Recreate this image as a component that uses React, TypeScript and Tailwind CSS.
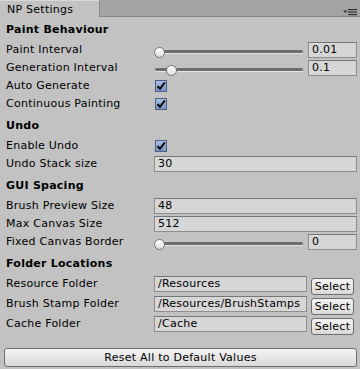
import React from "react";

const font = "font-['DejaVu_Sans',sans-serif]";

function Heading({ children }: { children: React.ReactNode }) {
  return (
    <div className="mt-[4px] mb-[2px] flex h-[18px] items-center pl-[6px] font-bold leading-[18px]">
      {children}
    </div>
  );
}

function Row({ label, children, h = "h-[18px]" }: { label: string; children: React.ReactNode; h?: string }) {
  return (
    <div className={`flex ${h} items-start`}>
      <div className="w-[154px] shrink-0 pl-[6px] leading-[18px] whitespace-nowrap">{label}</div>
      <div className="flex flex-1 items-start pr-[3px]">{children}</div>
    </div>
  );
}

function Field({ value, className = "" }: { value: string; className?: string }) {
  return (
    <div
      className={`mt-[1px] h-[16px] border border-[#8e8e8e] border-t-[#767676] bg-[#d6d6d6] pl-[3px] leading-[14px] whitespace-nowrap overflow-hidden ${className}`}
    >
      {value}
    </div>
  );
}

function Slider({ pos, value }: { pos: number; value: string }) {
  return (
    <div className="flex w-full items-start">
      <div className="relative mt-[1px] h-[16px] w-[149px] shrink-0">
        <div className="absolute left-[1px] right-0 top-[8px] h-[3px] rounded-full bg-[#6d6d6d] shadow-[0_1px_0_#e6e6e6]" />
        <div
          className="absolute top-[5px] h-[11px] w-[11px] rounded-full border border-[#767676] bg-[linear-gradient(#ffffff,#dcdcdc)]"
          style={{ left: pos }}
        />
      </div>
      <div className="ml-[5px] flex-1">
        <Field value={value} />
      </div>
    </div>
  );
}

function Check() {
  return (
    <div className="mt-[3px] ml-[1px] flex h-[12px] w-[12px] items-center justify-center border border-[#4e5f80] bg-[linear-gradient(#a9bde3,#7794c8)]">
      <svg width="10" height="10" viewBox="0 0 10 10">
        <path d="M1.5 5.2 L4 7.8 L8.8 1.5" fill="none" stroke="#000" strokeWidth="2" />
      </svg>
    </div>
  );
}

function FolderRow({ label, value }: { label: string; value: string }) {
  return (
    <Row label={label} h="h-[20px]">
      <Field value={value} className="w-[153px]" />
      <div className="ml-[4px] mt-[3px] flex h-[17px] w-[43px] items-center justify-center rounded-[3px] border border-[#6f6f6f] bg-[linear-gradient(#f4f4f4,#d9d9d9)] leading-none">
        Select
      </div>
    </Row>
  );
}

export default function App() {
  return (
    <div className={`${font} flex h-[369px] w-[360px] flex-col bg-[#c2c2c2] text-[11px] tracking-[0.25px] text-black`}>
      <div className="flex h-[17px] shrink-0 bg-[#a3a3a3]">
        <div className="flex w-[100px] items-center rounded-tr-[2px] border-r border-t border-[#8a8a8a] border-t-[#d8d8d8] bg-[#c2c2c2] pl-[7px] leading-none">
          NP Settings
        </div>
        <div className="relative flex-1 border-b border-[#868686]">
          <div className="absolute right-[3px] top-[9px] flex items-center gap-[1px]">
            <svg width="14" height="7" viewBox="0 0 14 7">
              <path d="M0 1.5 H4.5 L2.25 4 Z" fill="#333" />
              <rect x="5" y="0" width="9" height="1.2" fill="#333" />
              <rect x="5" y="2.5" width="9" height="1.2" fill="#333" />
              <rect x="5" y="5" width="9" height="1.2" fill="#333" />
            </svg>
          </div>
        </div>
      </div>

      <div className="flex flex-1 flex-col">
        <Heading>Paint Behaviour</Heading>
        <Row label="Paint Interval">
          <Slider pos={0} value="0.01" />
        </Row>
        <Row label="Generation Interval">
          <Slider pos={12} value="0.1" />
        </Row>
        <Row label="Auto Generate">
          <Check />
        </Row>
        <Row label="Continuous Painting">
          <Check />
        </Row>

        <Heading>Undo</Heading>
        <Row label="Enable Undo">
          <Check />
        </Row>
        <Row label="Undo Stack size">
          <Field value="30" className="flex-1" />
        </Row>

        <Heading>GUI Spacing</Heading>
        <Row label="Brush Preview Size">
          <Field value="48" className="flex-1" />
        </Row>
        <Row label="Max Canvas Size">
          <Field value="512" className="flex-1" />
        </Row>
        <Row label="Fixed Canvas Border">
          <Slider pos={0} value="0" />
        </Row>

        <Heading>Folder Locations</Heading>
        <FolderRow label="Resource Folder" value="/Resources" />
        <FolderRow label="Brush Stamp Folder" value="/Resources/BrushStamps" />
        <FolderRow label="Cache Folder" value="/Cache" />

        <div className="flex-1" />
        <div className="mb-[2px] ml-[4px] mr-[3px] flex h-[19px] items-center justify-center rounded-[3px] border border-[#6f6f6f] bg-[linear-gradient(#f4f4f4,#d9d9d9)] leading-none">
          Reset All to Default Values
        </div>
      </div>
    </div>
  );
}
